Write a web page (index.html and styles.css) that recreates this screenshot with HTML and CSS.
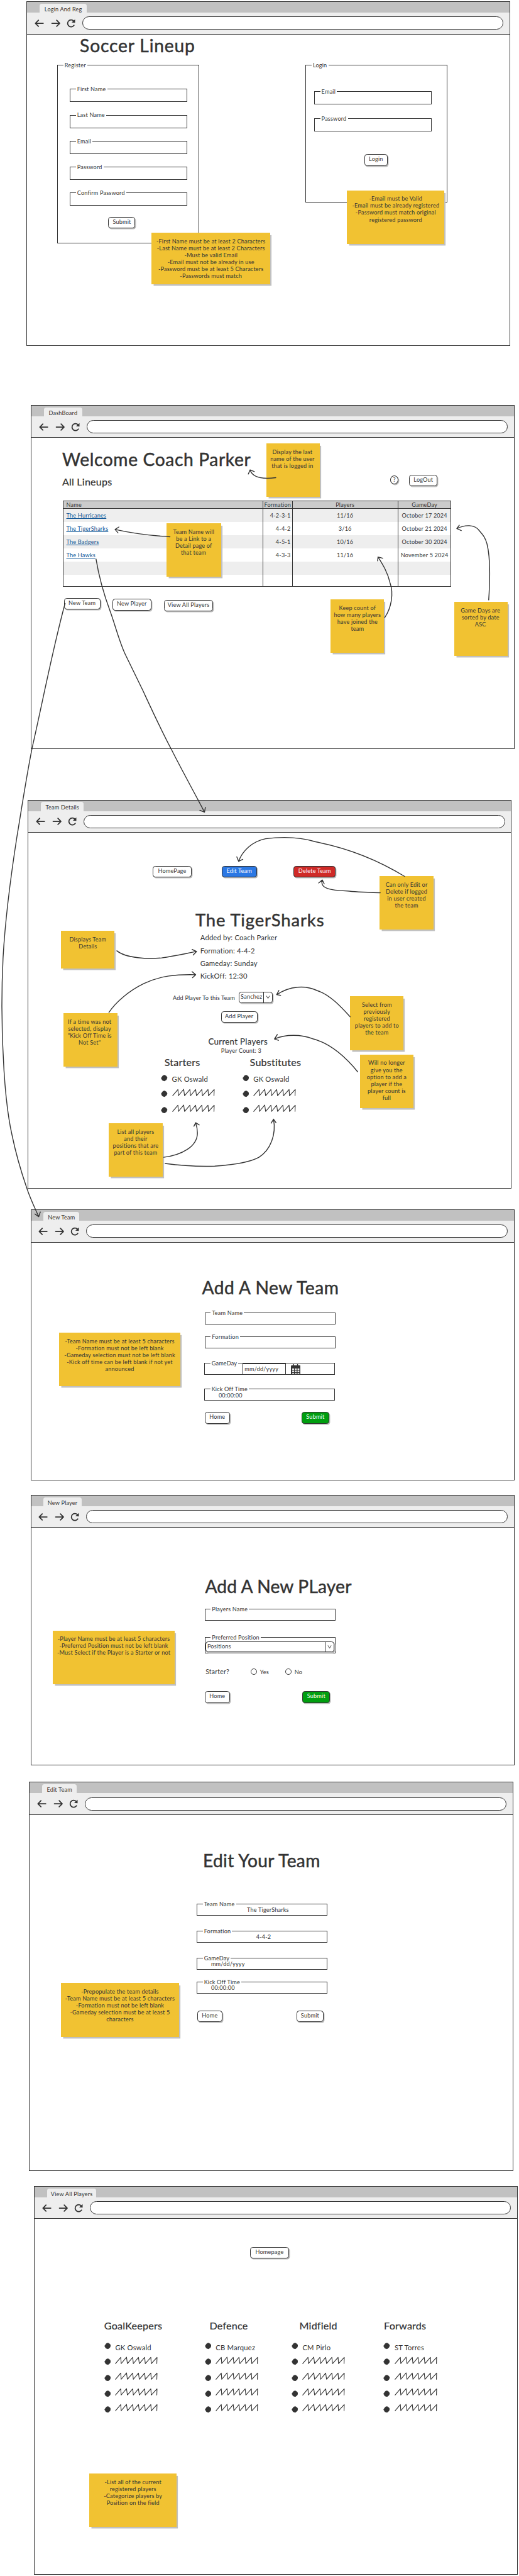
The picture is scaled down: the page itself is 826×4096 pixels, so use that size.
FILE: index.html
```html
<!DOCTYPE html>
<html lang="en">
<head>
<meta charset="utf-8">
<title>Soccer Lineup wireframes</title>
<link rel="stylesheet" href="styles.css">
</head>
<body>
<svg class="defs" width="0" height="0" aria-hidden="true">
  <symbol id="nav" viewBox="0 0 96 20">
    <g fill="none" stroke="#333" stroke-width="2.6" stroke-linecap="round" stroke-linejoin="round">
      <path d="M20 10H2M9 3L2 10l7 7"/>
      <path d="M40 10h18M51 3l7 7-7 7"/>
      <path d="M91 14.5a8 8 0 1 1-1-10"/>
    </g>
    <path d="M93.500 1v8l-8-1z" fill="#333"/>
  </symbol>
  <symbol id="dot" viewBox="0 0 16 16"><path d="M5 2L9 .8l4 2.200 2.400 4-1.800 4.500L9 15l-5.300-1.800L.8 8z" fill="#333" stroke="#333" stroke-linejoin="round"/></symbol>
  <symbol id="scribble" viewBox="0 0 97 18"><path d="M1 16L13 2l1 14L26 1.500 28 16 40 2l1.500 14L53 2l2 14L67 2l1.500 14L81 2l1 14L95 2l-.5 14" fill="none" stroke="#333" stroke-width="1.600" stroke-linejoin="round" stroke-linecap="round"/></symbol>
  <symbol id="chevron" viewBox="0 0 10 10"><path d="M1.500 2L5 8l3.500-6" fill="none" stroke="#333" stroke-width="1.400"/></symbol>
</svg>
<main class="canvas">

<section class="window w-login">
  <div class="tabs"><span class="tab tab-login">Login And Reg</span></div>
  <div class="toolbar"><svg class="nav"><use href="#nav"/></svg><div class="url"></div></div>
  <h1 class="title">Soccer Lineup</h1>
  <div class="forms">
    <fieldset class="group group-register"><legend>Register</legend>
      <div class="fields">
        <fieldset><legend>First Name</legend></fieldset>
        <fieldset><legend>Last Name</legend></fieldset>
        <fieldset><legend>Email</legend></fieldset>
        <fieldset><legend>Password</legend></fieldset>
        <fieldset><legend>Confirm Password</legend></fieldset>
      </div>
      <span class="btn">Submit</span>
    </fieldset>
    <fieldset class="group group-login"><legend>Login</legend>
      <div class="fields">
        <fieldset><legend>Email</legend></fieldset>
        <fieldset><legend>Password</legend></fieldset>
      </div>
      <span class="btn">Login</span>
    </fieldset>
  </div>
</section>

<section class="window w-dash">
  <div class="tabs"><span class="tab tab-dash">DashBoard</span></div>
  <div class="toolbar"><svg class="nav"><use href="#nav"/></svg><div class="url"></div></div>
  <h1 class="title">Welcome Coach Parker</h1>
  <div class="subhead"><h2>All Lineups</h2><span class="help">?</span><span class="btn">LogOut</span></div>
  <table class="lineups">
    <colgroup><col class="c-name"><col class="c-form"><col class="c-play"><col class="c-day"></colgroup>
    <thead><tr><th>Name</th><th>Formation</th><th>Players</th><th>GameDay</th></tr></thead>
    <tbody>
      <tr><td><a>The Hurricanes</a></td><td>4-2-3-1</td><td>11/16</td><td>October 17 2024</td></tr>
      <tr><td><a>The TigerSharks</a></td><td>4-4-2</td><td>3/16</td><td>October 21 2024</td></tr>
      <tr><td><a>The Badgers</a></td><td>4-5-1</td><td>10/16</td><td>October 30 2024</td></tr>
      <tr><td><a>The Hawks</a></td><td>4-3-3</td><td>11/16</td><td>November 5 2024</td></tr>
      <tr><td></td><td></td><td></td><td></td></tr>
      <tr class="last"><td></td><td></td><td></td><td></td></tr>
    </tbody>
  </table>
  <div class="actions"><span class="btn b1">New Team</span><span class="btn b2">New Player</span><span class="btn b3">View All Players</span></div>
</section>

<section class="window w-details">
  <div class="tabs"><span class="tab tab-details">Team Details</span></div>
  <div class="toolbar"><svg class="nav"><use href="#nav"/></svg><div class="url"></div></div>
  <div class="actions"><span class="btn b1">HomePage</span><span class="btn b2 blue">Edit Team</span><span class="btn b3 red">Delete Team</span></div>
  <h1 class="title">The TigerSharks</h1>
  <div class="facts"><p class="f1">Added by: Coach Parker</p><p>Formation: 4-4-2</p><p>Gameday: Sunday</p><p>KickOff: 12:30</p></div>
  <div class="pick"><span class="pick-label">Add Player To this Team</span><span class="select"><span>Sanchez</span><i><svg><use href="#chevron"/></svg></i></span></div>
  <span class="btn add">Add Player</span>
  <h3>Current Players</h3>
  <p class="count">Player Count: 3</p>
  <div class="columns">
    <div class="col k1"><h2>Starters</h2><ul>
      <li><svg class="dot"><use href="#dot"/></svg><span>GK Oswald</span></li>
      <li><svg class="dot"><use href="#dot"/></svg><svg class="scribble"><use href="#scribble"/></svg></li>
      <li><svg class="dot"><use href="#dot"/></svg><svg class="scribble"><use href="#scribble"/></svg></li></ul></div>
    <div class="col k2"><h2>Substitutes</h2><ul>
      <li><svg class="dot"><use href="#dot"/></svg><span>GK Oswald</span></li>
      <li><svg class="dot"><use href="#dot"/></svg><svg class="scribble"><use href="#scribble"/></svg></li>
      <li><svg class="dot"><use href="#dot"/></svg><svg class="scribble"><use href="#scribble"/></svg></li></ul></div>
  </div>
</section>

<section class="window w-newteam">
  <div class="tabs"><span class="tab tab-newteam">New Team</span></div>
  <div class="toolbar"><svg class="nav"><use href="#nav"/></svg><div class="url"></div></div>
  <h1 class="title">Add A New Team</h1>
  <div class="form">
    <fieldset class="f1"><legend>Team Name</legend></fieldset>
    <fieldset class="f2"><legend>Formation</legend></fieldset>
    <fieldset class="f3"><legend>GameDay</legend>
      <div class="date"><span>mm/dd/yyyy</span>
        <svg class="cal" viewBox="0 0 22 24"><path d="M5 0h2v4H5zM14 0h2v4h-2z" fill="#333"/><rect y="3" width="22" height="21" rx="2" fill="#333"/><path d="M3 10h4v3H3zM9 10h4v3H9zM15 10h4v3h-4zM3 15h4v3H3zM9 15h4v3H9zM15 15h4v3h-4zM3 20h4v2H3zM9 20h4v2H9zM15 20h4v2h-4z" fill="#fff"/></svg>
      </div>
    </fieldset>
    <fieldset class="f4"><legend>Kick Off Time</legend><p class="time">00:00:00</p></fieldset>
    <div class="send"><span class="btn b1">Home</span><span class="btn b2 green">Submit</span></div>
  </div>
</section>

<section class="window w-newplayer">
  <div class="tabs"><span class="tab tab-newplayer">New Player</span></div>
  <div class="toolbar"><svg class="nav"><use href="#nav"/></svg><div class="url"></div></div>
  <h1 class="title">Add A New PLayer</h1>
  <div class="form">
    <fieldset class="f1"><legend>Players Name</legend></fieldset>
    <fieldset class="f2"><legend>Preferred Position</legend><span class="select"><span>Positions</span><i><svg><use href="#chevron"/></svg></i></span></fieldset>
    <div class="radios"><b>Starter?</b><span><i></i>Yes</span><span><i></i>No</span></div>
    <div class="send"><span class="btn b1">Home</span><span class="btn b2 green">Submit</span></div>
  </div>
</section>

<section class="window w-edit">
  <div class="tabs"><span class="tab tab-edit">Edit Team</span></div>
  <div class="toolbar"><svg class="nav"><use href="#nav"/></svg><div class="url"></div></div>
  <h1 class="title">Edit Your Team</h1>
  <div class="form">
    <fieldset class="f1"><legend>Team Name</legend><p class="v1">The TigerSharks</p></fieldset>
    <fieldset class="f2"><legend>Formation</legend><p class="v2">4-4-2</p></fieldset>
    <fieldset class="f3"><legend>GameDay</legend><p class="time">mm/dd/yyyy</p></fieldset>
    <fieldset class="f4"><legend>Kick Off Time</legend><p class="time">00:00:00</p></fieldset>
    <div class="send"><span class="btn b1">Home</span><span class="btn b2">Submit</span></div>
  </div>
</section>

<section class="window w-all">
  <div class="tabs"><span class="tab tab-all">View All Players</span></div>
  <div class="toolbar"><svg class="nav"><use href="#nav"/></svg><div class="url"></div></div>
  <span class="btn home">Homepage</span>
  <div class="columns">
    <div class="col k1"><h2>GoalKeepers</h2><ul>
      <li><svg class="dot"><use href="#dot"/></svg><span>GK Oswald</span></li>
      <li><svg class="dot"><use href="#dot"/></svg><svg class="scribble"><use href="#scribble"/></svg></li>
      <li><svg class="dot"><use href="#dot"/></svg><svg class="scribble"><use href="#scribble"/></svg></li>
      <li><svg class="dot"><use href="#dot"/></svg><svg class="scribble"><use href="#scribble"/></svg></li>
      <li><svg class="dot"><use href="#dot"/></svg><svg class="scribble"><use href="#scribble"/></svg></li></ul></div>
    <div class="col k2"><h2>Defence</h2><ul>
      <li><svg class="dot"><use href="#dot"/></svg><span>CB Marquez</span></li>
      <li><svg class="dot"><use href="#dot"/></svg><svg class="scribble"><use href="#scribble"/></svg></li>
      <li><svg class="dot"><use href="#dot"/></svg><svg class="scribble"><use href="#scribble"/></svg></li>
      <li><svg class="dot"><use href="#dot"/></svg><svg class="scribble"><use href="#scribble"/></svg></li>
      <li><svg class="dot"><use href="#dot"/></svg><svg class="scribble"><use href="#scribble"/></svg></li></ul></div>
    <div class="col k3"><h2>Midfield</h2><ul>
      <li><svg class="dot"><use href="#dot"/></svg><span>CM Pirlo</span></li>
      <li><svg class="dot"><use href="#dot"/></svg><svg class="scribble"><use href="#scribble"/></svg></li>
      <li><svg class="dot"><use href="#dot"/></svg><svg class="scribble"><use href="#scribble"/></svg></li>
      <li><svg class="dot"><use href="#dot"/></svg><svg class="scribble"><use href="#scribble"/></svg></li>
      <li><svg class="dot"><use href="#dot"/></svg><svg class="scribble"><use href="#scribble"/></svg></li></ul></div>
    <div class="col k4"><h2>Forwards</h2><ul>
      <li><svg class="dot"><use href="#dot"/></svg><span>ST Torres</span></li>
      <li><svg class="dot"><use href="#dot"/></svg><svg class="scribble"><use href="#scribble"/></svg></li>
      <li><svg class="dot"><use href="#dot"/></svg><svg class="scribble"><use href="#scribble"/></svg></li>
      <li><svg class="dot"><use href="#dot"/></svg><svg class="scribble"><use href="#scribble"/></svg></li>
      <li><svg class="dot"><use href="#dot"/></svg><svg class="scribble"><use href="#scribble"/></svg></li></ul></div>
  </div>
</section>

<!-- Sticky notes pinned over the windows -->
<div class="note n-reg">-First Name must be at least 2 Characters<br>-Last Name must be at least 2 Characters<br>-Must be valid Email<br>-Email must not be already in use<br>-Password must be at least 5 Characters<br>-Passwords must match</div>
<div class="note n-log">-Email must be Valid<br>-Email must be already registered<br>-Password must match original<br>registered password</div>
<div class="note n-name">Display the last<br>name of the user<br>that is logged in</div>
<div class="note n-link">Team Name will<br>be a Link to a<br>Detail page of<br>that team</div>
<div class="note n-keep">Keep count of<br>how many players<br>have joined the<br>team</div>
<div class="note n-sort">Game Days are<br>sorted by date<br>ASC</div>
<div class="note n-only">Can only Edit or<br>Delete if logged<br>in user created<br>the team</div>
<div class="note n-disp">Displays Team<br>Details</div>
<div class="note n-time">If a time was not<br>selected, display<br>"Kick Off Time is<br>Not Set"</div>
<div class="note n-prev">Select from<br>previously<br>registered<br>players to add to<br>the team</div>
<div class="note n-full">Will no longer<br>give you the<br>option to add a<br>player if the<br>player count is<br>full</div>
<div class="note n-list">List all players<br>and their<br>positions that are<br>part of this team</div>
<div class="note n-team">-Team Name must be at least 5 characters<br>-Formation must not be left blank<br>-Gameday selection must not be left blank<br>-Kick off time can be left blank if not yet<br>announced</div>
<div class="note n-player">-Player Name must be at least 5 characters<br>-Preferred Position must not be left blank<br>-Must Select if the Player is a Starter or not</div>
<div class="note n-edit">-Prepopulate the team details<br>-Team Name must be at least 5 characters<br>-Formation must not be left blank<br>-Gameday selection must be at least 5<br>characters</div>
<div class="note n-all">-List all of the current<br>registered players<br>-Categorize players by<br>Position on the field</div>

<!-- Arrows linking notes and windows -->
<svg class="arrows" viewBox="0 0 1172 5814" fill="none" stroke="#333" stroke-width="2" stroke-linecap="round" stroke-linejoin="round">
  <path d="M623 1078C585 1083 570 1075 565 1061M561 1070L565 1060.500 574.500 1064.500"/>
  <path d="M384 1211.500Q319 1208 260 1195M268.500 1189.500L260 1195 266.500 1202.500"/>
  <path d="M217 1262C224 1305 236 1345 249 1380C260 1410 270 1450 283 1477L323 1559C343 1602 365 1650 387 1691C410 1737 437 1785 462 1833M451.500 1829L462 1833 464 1822"/>
  <path d="M147 1362C120 1460 95 1590 73 1686C60 1750 48 1830 38 1890C24 1980 11 2090 7 2160C3 2240 4 2340 9 2416C13 2480 20 2530 27 2561C36 2605 48 2645 60 2680C68 2705 78 2725 87.500 2746M79 2740L87.500 2746 91 2735.500"/>
  <path d="M869 1394C884 1372 890 1340 881 1315C876 1293 866 1276 854 1257M853 1266L854 1257 864.500 1260"/>
  <path d="M1104 1354C1107 1310 1109 1262 1100 1227C1096 1212 1090 1206 1083 1198C1073 1183 1050 1184 1032 1193M1037.500 1185.500L1032 1193 1042 1197.500"/>
  <path d="M914 1978C860 1945 790 1915 713 1900C680 1890 640 1888 600 1893C570 1899 548 1920 539 1944M535 1934L539 1944 548.500 1939.500"/>
  <path d="M859 2015C830 2014 800 2013 785 2011C745 2010 722 2005 728 1986M720 1993L728 1986 732.500 1995"/>
  <path d="M264 2146C285 2163 335 2165 365 2162C395 2158 420 2152 444 2147.500M434 2143L444 2147.500 436.500 2155.500"/>
  <path d="M246 2285C262 2262 290 2237 325 2220C362 2202 400 2199 442 2200M434 2193L442 2200 435 2206.500"/>
  <path d="M791 2295C770 2272 745 2245 717 2236C690 2223 655 2225 625 2245M630 2235.500L625 2245 634 2246.500"/>
  <path d="M808 2419C780 2385 745 2355 708 2345C680 2334 645 2334 620 2345M626.500 2335L620 2345 629 2348"/>
  <path d="M370 2612C410 2607 446 2588 446 2557C446 2548 444 2540 442 2534M438 2542L442 2534 450 2539"/>
  <path d="M373 2626C410 2631 450 2633 485 2632C530 2629 567 2622 585 2612C612 2595 624 2560 618 2526M612.500 2535L618 2526 623.500 2534"/>
</svg>
</main>
</body>
</html>
```
FILE: styles.css
```css
* { box-sizing: border-box; }
html, body { margin: 0; padding: 0; background: #fff; overflow: hidden; }
h1, h2, h3, p, ul { margin: 0; padding: 0; font-weight: 400; }
ul { list-style: none; }
.defs { position: absolute; }

.canvas {
  zoom: 0.7045;
  position: relative;
  width: 1172px;
  height: 5814px;
  padding-top: 3px;
  font-family: Lato, "Open Sans", sans-serif;
  font-size: 13px;
  line-height: 16px;
  letter-spacing: 0.250px;
  color: #333;
  white-space: nowrap;
}

/* Browser windows */
.window { width: 1093px; border: 2px solid #333; overflow: hidden; display: flex; flex-direction: column; align-items: flex-start; }
.window > * { flex: none; }
.tabs { display: flex; align-items: flex-end; width: 100%; height: 24px; padding-left: 28px; background: #c1c1c1; }
.tab { height: 20px; line-height: 25px; text-align: center; background: #eee; border-radius: 5px 5px 0 0; }
.toolbar { display: flex; align-items: center; gap: 14px; width: 100%; height: 49px; padding: 0 14px 0 16px; background: #eee; border-bottom: 2px solid #333; }
.nav { width: 94px; height: 20px; }
.url { flex: 1; height: 30px; border: 2px solid #333; border-radius: 15px; background: #fff; }
.title { height: 50px; line-height: 50px; font-size: 40px; letter-spacing: 0.500px; -webkit-text-stroke: 0.7px #333; }
h2 { height: 30px; line-height: 30px; font-size: 23px; -webkit-text-stroke: 0.3px #333; }
h3 { height: 24px; line-height: 24px; font-size: 19px; letter-spacing: 0.400px; -webkit-text-stroke: 0.2px #333; }

.btn { display: block; height: 26px; line-height: 21px; text-align: center; border: 2px solid #333; border-radius: 6px; background: #fff; box-shadow: 2px 2px 0 #bbb; }
.blue { background: #2b78e4; color: #fff; }
.red { background: #cf2a27; color: #fff; }
.green { background: #009e0f; color: #fff; }

fieldset { margin: 0; padding: 0; border: 2px solid #333; min-width: 0; height: 34px; }
legend { height: 16px; margin-left: 12px; padding: 0 3px; }
.select { display: flex; height: 25px; line-height: 20px; border: 2px solid #333; border-radius: 6px; background: #fff; box-shadow: 2px 2px 0 #bbb; }
.select span { flex: 1; padding-left: 3px; }
.select i { display: flex; align-items: center; justify-content: center; width: 20px; border-left: 2px solid #333; }
.select svg { width: 10px; height: 10px; }

.tab-login { width: 107px; }
.tab-dash { width: 86px; }
.tab-details { width: 97px; }
.tab-newteam { width: 81px; }
.tab-newplayer { width: 86px; }
.tab-edit { width: 78px; }
.tab-all { width: 111px; }

/* Login and registration */
.w-login { margin-left: 60px; height: 777px; }
.w-login .title { margin: 1px 0 0 119px; letter-spacing: 1.200px; }
.forms { display: flex; gap: 241px; margin: 11px 0 0 68px; }
.group { width: 320px; }
.group-register { height: 410px; }
.group-login { height: 317px; }
.fields fieldset { width: 265px; height: 37px; }
.fields { display: flex; flex-direction: column; gap: 21.600px; }
.group-register .fields { margin: 38px 0 0 27px; }
.group-register .btn { width: 61px; margin: 25px 0 0 114px; }
.group-login .fields { margin: 43px 0 0 18px; gap: 24px; }
.group-login .btn { width: 53px; margin: 52px 0 0 131px; }

/* Dashboard */
.w-dash { margin: 134px 0 0 70px; height: 777px; }
.w-dash .title { margin: 24px 0 0 69px; letter-spacing: 0.900px; }
.subhead { display: flex; align-items: flex-start; width: 848px; margin: 9px 0 0 69px; }
.help { width: 19px; height: 20px; margin: 2px 24px 0 auto; line-height: 17px; text-align: center; border: 2px solid #333; border-radius: 50%; box-shadow: 2px 2px 0 #bbb; }
.subhead .btn { width: 64px; }
.lineups { width: 876px; margin: 28px 0 0 71px; table-layout: fixed; border-collapse: collapse; border: 2px solid #333; }
.c-name { width: 451px; }
.c-form { width: 66px; }
.c-play { width: 239px; }
.c-day { width: 120px; }
.lineups th { height: 18px; padding: 0; background: #cbcbcb; border: 2px solid #333; font-weight: 400; line-height: 14px; }
.lineups th:first-child { text-align: left; padding-left: 6px; }
.lineups td { height: 30px; padding: 0; border-left: 2px solid #333; text-align: center; }
.lineups td:first-child { text-align: left; padding-left: 6px; }
.lineups td:nth-child(2) { text-align: right; padding-right: 3px; }
.lineups tr:nth-child(odd) td { background: #eee; }
.lineups .last td { height: 25px; }
.lineups a { color: #0b5394; text-decoration: underline; }
.w-dash .actions { display: flex; align-items: flex-start; margin: 26px 0 0 73px; }
.w-dash .b1 { width: 82px; }
.w-dash .b2 { width: 87px; margin: 2px 0 0 28px; }
.w-dash .b3 { width: 111px; margin: 4px 0 0 29px; }

/* Team details */
.w-details { margin: 114px 0 0 63px; height: 878px; }
.w-details .actions { display: flex; margin: 75px 0 0 281px; }
.w-details .b1 { width: 87px; }
.w-details .b2 { width: 80px; margin-left: 68px; }
.w-details .b3 { width: 95px; margin-left: 83px; }
.w-details .title { margin: 71px 0 0 377px; font-size: 39px; letter-spacing: 1.200px; }
.facts { margin: 1px 0 0 388px; font-size: 16px; line-height: 29px; }
.pick { display: flex; line-height: 27px; margin: 20px 0 0 326px; }
.pick-label { width: 149px; }
.pick .select { width: 77px; }
.add { width: 82px; margin: 17px 0 0 435px; }
.w-details h3 { margin: 31px 0 0 406px; }
.count { margin-left: 435px; }
.columns { display: flex; }
.col li { display: flex; align-items: center; height: 36px; font-size: 16px; }
.dot { width: 15px; height: 15px; margin-right: 10px; }
.col li span { padding-top: 5px; }
.scribble { width: 97px; height: 18px; margin-bottom: 7px; }
.w-details .columns { margin: 2px 0 0 299px; }
.w-details ul { margin-top: 4px; }
.w-details .k1 { width: 184px; }
.w-details .k1 h2 { padding-left: 8px; }
.w-details .k2 h2 { padding-left: 17px; }

/* New team */
.form fieldset { width: 295px; }
.send { display: flex; }
.send .b1 { width: 57px; }
.send .b2 { width: 62px; }
.time { margin-left: 31px; line-height: 13px; }
.w-newteam { margin: 47px 0 0 69px; height: 611px; }
.w-newteam .title { margin: 77px 0 0 386px; letter-spacing: 0.700px; }
.w-newteam .form { margin: 24px 0 0 392px; }
.w-newteam .f2 { margin-top: 20px; }
.w-newteam .f3 { margin: 26px 0 0 -1px; }
.w-newteam .f4 { margin: 24px 0 0 -1px; }
.w-newteam .b2 { margin-left: 162px; }
.w-newteam .send, .w-newplayer .send, .w-edit .send { margin-top: 26px; }
.date { display: flex; margin: -8px 0 0 85px; }
.date span { width: 98px; height: 26px; line-height: 24px; text-align: center; padding-right: 12px; border: 2px solid #333; }
.cal { width: 22px; height: 24px; margin: 1px 0 0 11px; }

/* New player */
.w-newplayer { margin: 33px 0 0 69px; height: 611px; }
.w-newplayer .title { margin: 108px 0 0 393px; letter-spacing: 0.200px; }
.w-newplayer .form { margin: 18px 0 0 392px; }
.w-newplayer .f2 { height: 45px; margin-top: 29px; }
.w-newplayer .f2 .select { width: 291px; margin-top: 1px; }
.radios { display: flex; margin: 33px 0 0 2px; }
.radios b { width: 102px; font-weight: 400; font-size: 15px; }
.radios span { display: flex; align-items: center; width: 78px; }
.radios i { width: 14px; height: 14px; margin-right: 7px; border: 2px solid #333; border-radius: 50%; }
.w-newplayer .send { margin-top: 36px; }
.w-newplayer .b2 { margin-left: 164px; }

/* Edit team */
.w-edit { margin: 37px 0 0 66px; height: 878px; }
.w-edit .title { margin: 78px 0 0 391px; }
.w-edit .form { margin: 65px 0 0 377px; }
.w-edit .f2, .w-edit .f3 { margin-top: 27px; }
.w-edit .f4 { margin-top: 20px; }
.w-edit p { line-height: 12px; }
.v1 { margin-left: 112px; }
.v2 { margin-left: 133px; }
.w-edit .send { margin: 39px 0 0 1px; }
.w-edit .b2 { margin-left: 167px; }

/* All players */
.w-all { margin: 34px 0 0 77px; height: 877px; }
.home { width: 87px; margin: 63px 0 0 487px; }
.w-all .columns { margin: 136px 0 0 157px; }
.w-all ul { margin-top: 14px; }
.w-all li { height: 35.800px; }
.w-all .k1 { width: 227px; }
.w-all .k2 { width: 196px; }
.w-all .k3 { width: 208px; }
.w-all .k2 h2 { padding-left: 11px; }
.w-all .k3 h2 { padding-left: 18px; }
.w-all .k4 h2 { padding-left: 1px; }

/* Notes */
.note { position: absolute; width: 121px; height: 121px; padding-top: 11px; line-height: 15.700px; text-align: center; background: #f1c232; box-shadow: 4px 4.500px 0 -1px #c0c0c0; }
.n-reg { left: 342px; top: 525px; width: 269px; height: 116px; }
.n-log { left: 784px; top: 429.500px; width: 220px; }
.n-name { left: 602px; top: 1001px; padding-right: 4px; }
.n-link { left: 376px; top: 1181px; width: 123px; }
.n-keep { left: 747px; top: 1353px; }
.n-sort { left: 1026px; top: 1359px; padding-right: 2px; }
.n-only { left: 858px; top: 1977px; }
.n-disp { left: 138px; top: 2101px; height: 85px; }
.n-time { left: 144px; top: 2287px; padding-right: 4px; }
.n-prev { left: 791px; top: 2249px; }
.n-full { left: 813px; top: 2380px; }
.n-list { left: 246px; top: 2535px; }
.n-team { left: 133px; top: 3008px; width: 275px; }
.n-player { left: 119px; top: 3680px; width: 276px; }
.n-edit { left: 137px; top: 4476px; width: 268px; }
.n-all { left: 202px; top: 5583px; width: 197px; }

.arrows { position: absolute; left: 0; top: 0; width: 1172px; height: 5814px; }
```
